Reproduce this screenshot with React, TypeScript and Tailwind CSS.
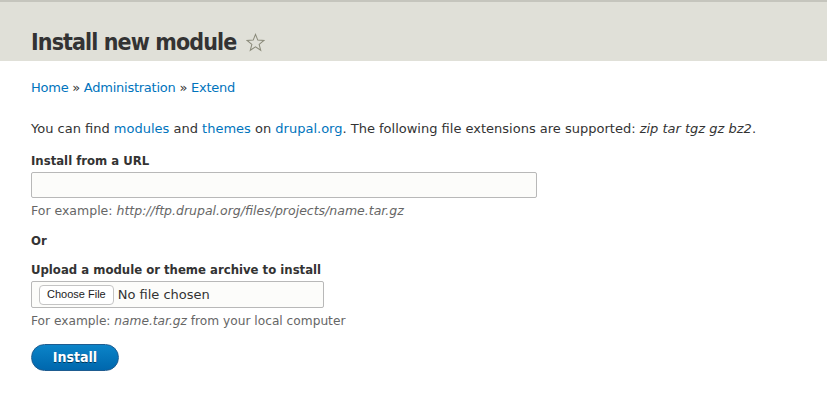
export default function App() {
  return (
    <div className="min-h-[393px] w-[827px] bg-white font-['DejaVu_Sans',sans-serif] text-[13px] text-[#333]">
      <div className="h-[61px] border-t-2 border-[#c5c5bd] bg-[#e0e0d8] pl-[31px] pt-[26px]">
        <h1 className="flex items-center font-['DejaVu_Sans_Condensed','DejaVu_Sans',sans-serif] text-[23px] font-bold leading-[28px] tracking-[-0.9px] text-[#333]">
          Install new module
          <svg className="ml-[10px]" width="19" height="19" viewBox="0 0 24 24" fill="none" stroke="#8a8a7a" strokeWidth="1.3" strokeLinejoin="miter">
            <path d="M12 1.8l2.9 7.2 7.7.4-6 4.9 2 7.5L12 17.6l-6.6 4.2 2-7.5-6-4.9 7.7-.4z" />
          </svg>
        </h1>
      </div>

      <div className="px-[31px]">
        <div className="mt-[18px] leading-[18px] tracking-[-0.25px]">
          <a className="text-[#0074bd]">Home</a> » <a className="text-[#0074bd]">Administration</a> »{" "}
          <a className="text-[#0074bd]">Extend</a>
        </div>

        <p className="mt-[23px] leading-[18px]">
          You can find <a className="text-[#0074bd]">modules</a> and <a className="text-[#0074bd]">themes</a> on{" "}
          <a className="text-[#0074bd]">drupal.org</a>. The following file extensions are supported:{" "}
          <em>zip tar tgz gz bz2</em>.
        </p>

        <div className="mt-[14px]">
          <label className="block font-['DejaVu_Sans_Condensed','DejaVu_Sans',sans-serif] font-bold leading-[18px]">Install from a URL</label>
          <div className="mt-[2px] h-[26px] w-[506px] rounded-[2px] border border-[#b8b8b8] bg-[#fcfcfa]" />
          <div className="mt-[4px] text-[12.5px] leading-[18px] text-[#666]">
            For example: <em>http://ftp.drupal.org/files/projects/name.tar.gz</em>
          </div>
        </div>

        <div className="mt-[12px] font-['DejaVu_Sans_Condensed','DejaVu_Sans',sans-serif] font-bold leading-[18px]">Or</div>

        <div className="mt-[11px]">
          <label className="block font-['DejaVu_Sans_Condensed','DejaVu_Sans',sans-serif] font-bold leading-[18px]">Upload a module or theme archive to install</label>
          <div className="mt-[2px] flex h-[27px] w-[293px] items-center rounded-[2px] border border-[#b8b8b8] bg-[#fcfcfa] pl-[7px]">
            <span className="flex h-[20px] items-center rounded-[4px] border border-[#c4c4c4] bg-white px-[7px] font-['Liberation_Sans',sans-serif] text-[11px] text-[#222]">
              Choose File
            </span>
            <span className="ml-[4px] text-[13px] text-[#333]">No file chosen</span>
          </div>
          <div className="mt-[4px] text-[12.2px] leading-[18px] text-[#666]">
            For example: <em>name.tar.gz</em> from your local computer
          </div>
        </div>

        <button className="mt-[14px] flex h-[27px] w-[88px] items-center justify-center rounded-full border border-[#1e5c90] bg-gradient-to-b from-[#0c84c8] to-[#0067ad] font-['DejaVu_Sans_Condensed','DejaVu_Sans',sans-serif] text-[14px] font-bold text-white [text-shadow:0_1px_rgba(0,0,0,0.5)]">
          Install
        </button>
      </div>
    </div>
  );
}
